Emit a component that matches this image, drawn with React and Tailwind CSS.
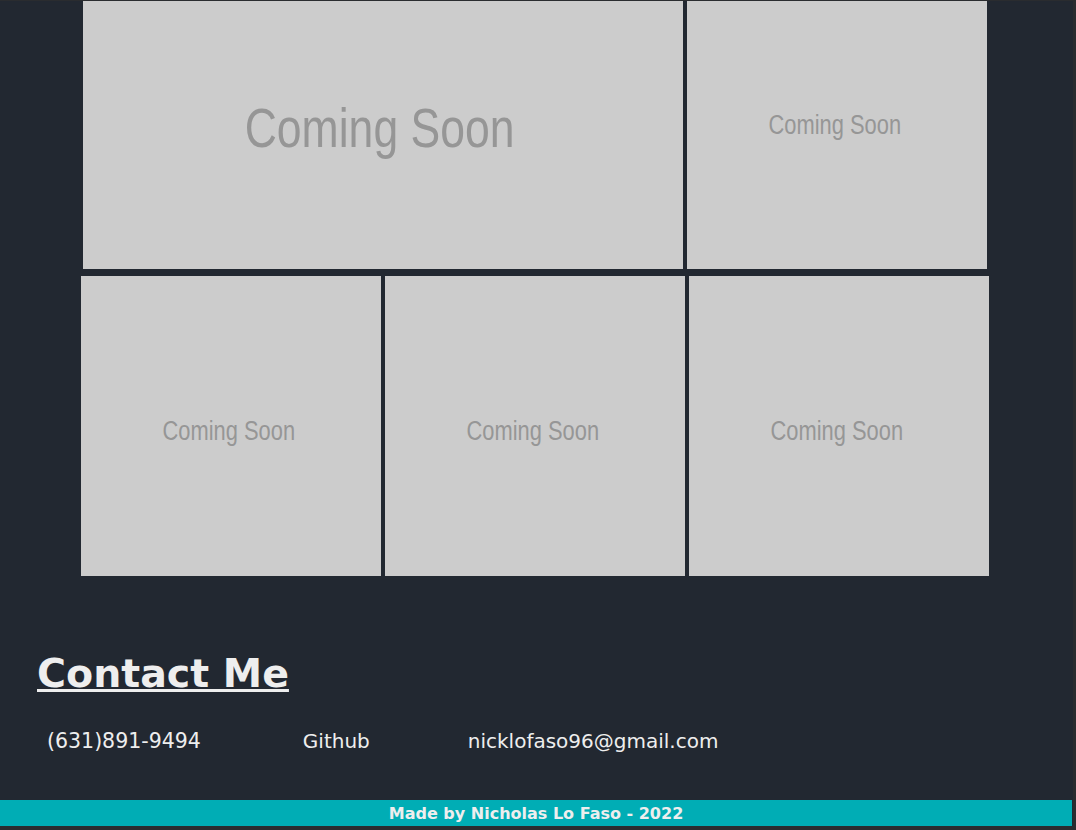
import React from "react";

const soon = "inline-block scale-x-[0.81] font-['Liberation_Sans',Arial,sans-serif] text-[#969696] leading-none whitespace-nowrap";

function Tile({ className, text, textClass }) {
  return (
    <div className={"bg-[#cccccc] flex items-center justify-center shrink-0 " + className}>
      <span className={soon + " " + textClass}>{text}</span>
    </div>
  );
}

export default function App() {
  const contacts = [
    { label: "(631)891-9494", cls: "ml-[47px] text-[20.5px]" },
    { label: "Github", cls: "ml-[102px]" },
    { label: "nicklofaso96@gmail.com", cls: "ml-[98px]" },
  ];
  return (
    <div className="w-[1076px] h-[830px] overflow-hidden bg-[#2a2c2f] pt-px pr-[3px] pb-[4px]">
      <div className="h-full bg-[#222831] flex flex-col font-['DejaVu_Sans',sans-serif] text-[#eeeeee]">
        <div className="flex gap-[4px] pl-[83px] h-[268px]">
          <Tile className="w-[600px] h-[268px] pb-[14px] pr-[7px]" text="Coming Soon" textClass="text-[55px]" />
          <Tile className="w-[300px] h-[268px] pb-[20px] pr-[5px]" text="Coming Soon" textClass="text-[27px]" />
        </div>
        <div className="flex gap-[4px] pl-[81px] mt-[7px]">
          <Tile className="w-[300px] h-[300px] pt-[11px] pr-[5px]" text="Coming Soon" textClass="text-[27px]" />
          <Tile className="w-[300px] h-[300px] pt-[11px] pr-[5px]" text="Coming Soon" textClass="text-[27px]" />
          <Tile className="w-[300px] h-[300px] pt-[11px] pr-[5px]" text="Coming Soon" textClass="text-[27px]" />
        </div>
        <h2 className="mt-[77px] pl-[37px] text-[39.5px] leading-[40px] font-bold underline">
          Contact Me
        </h2>
        <div className="flex items-baseline mt-[34px] text-[20px] leading-[28px]">
          {contacts.map((c) => (
            <span key={c.label} className={c.cls}>
              {c.label}
            </span>
          ))}
        </div>
        <footer className="mt-auto mr-px h-[26px] pt-px bg-[#00adb5] flex items-center justify-center text-[16px] font-bold">
          Made by Nicholas Lo Faso - 2022
        </footer>
      </div>
    </div>
  );
}
